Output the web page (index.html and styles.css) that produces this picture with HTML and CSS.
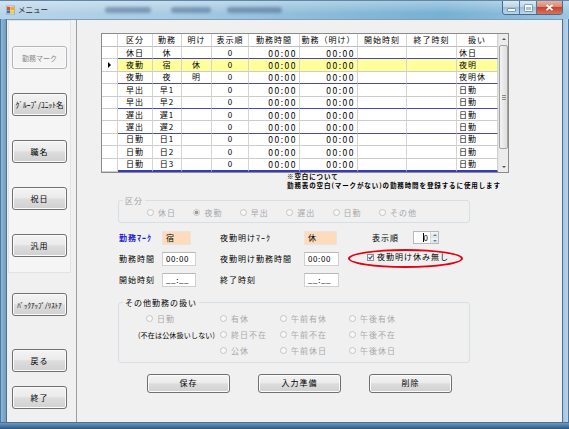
FILE: index.html
```html
<!DOCTYPE html>
<html lang="ja">
<head>
<meta charset="utf-8">
<title>メニュー</title>
<link rel="stylesheet" href="styles.css">
</head>
<body>
<div class="win">
  <div class="titlebar">
    <svg class="appicon" width="9" height="10" viewBox="0 0 9 10">
      <rect x="0.3" y="1" width="8.4" height="8" fill="#fff" stroke="#7d8da0" stroke-width="0.6"/>
      <rect x="1" y="1.8" width="3.4" height="3.2" fill="#e84a2a"/>
      <rect x="4.6" y="1.8" width="3.4" height="3.2" fill="#f6a91c"/>
      <rect x="1" y="5.3" width="3.4" height="3" fill="#2f6fd6"/>
      <rect x="4.6" y="5.3" width="3.4" height="3" fill="#f6d21c"/>
    </svg>
    <span class="title">メニュー</span>
    <span class="blur b1"></span>
    <span class="blur b2"></span>
    <span class="blur b3"></span>
    <div class="caps">
      <span class="cap min"><i></i></span>
      <span class="cap max"><i></i></span>
      <span class="cap close"><svg width="9" height="7" viewBox="0 0 9 7"><path d="M1.5 0.8 L7.5 6.2 M7.5 0.8 L1.5 6.2" stroke="#fff" stroke-width="1.8"/></svg></span>
    </div>
  </div>
  <div class="body">
    <div class="frame-l"></div>
    <div class="client">
      <div class="side">
        <div class="side-panel">
          <div class="btn sbtn disabled">勤務マーク</div>
          <div class="btn sbtn hw">ｸﾞﾙｰﾌﾟ/ﾕﾆｯﾄ名</div>
          <div class="btn sbtn">職名</div>
          <div class="btn sbtn">祝日</div>
          <div class="btn sbtn">汎用</div>
        </div>
        <div class="btn sbtn hw2 b-backup">ﾊﾞｯｸｱｯﾌﾟ/ﾘｽﾄｱ</div>
        <div class="btn sbtn b-back">戻る</div>
        <div class="btn sbtn b-end">終了</div>
      </div>
      <div class="main">
        <div class="dgv">
          <div class="tbl">
            <div class="hdr"><span></span><span>区分</span><span>勤務</span><span>明け</span><span>表示順</span><span>勤務時間</span><span>勤務（明け）</span><span>開始時刻</span><span>終了時刻</span><span>扱い</span></div>
            <div class="row grp"><span class="ind"></span><span class="c">休日</span><span class="c">休</span><span class="c"></span><span class="c n">0</span><span class="r t">00:00</span><span class="r t">00:00</span><span></span><span></span><span class="l">休日</span></div>
            <div class="row sel"><span class="ind"><b class="tri"></b></span><span class="c">夜勤</span><span class="c">宿</span><span class="c">休</span><span class="c n">0</span><span class="r t">00:00</span><span class="r t">00:00</span><span></span><span></span><span class="l">夜明</span></div>
            <div class="row grp"><span class="ind"></span><span class="c">夜勤</span><span class="c">夜</span><span class="c">明</span><span class="c n">0</span><span class="r t">00:00</span><span class="r t">00:00</span><span></span><span></span><span class="l">夜明休</span></div>
            <div class="row"><span class="ind"></span><span class="c">早出</span><span class="c">早1</span><span class="c"></span><span class="c n">0</span><span class="r t">00:00</span><span class="r t">00:00</span><span></span><span></span><span class="l">日勤</span></div>
            <div class="row grp"><span class="ind"></span><span class="c">早出</span><span class="c">早2</span><span class="c"></span><span class="c n">0</span><span class="r t">00:00</span><span class="r t">00:00</span><span></span><span></span><span class="l">日勤</span></div>
            <div class="row"><span class="ind"></span><span class="c">遅出</span><span class="c">遅1</span><span class="c"></span><span class="c n">0</span><span class="r t">00:00</span><span class="r t">00:00</span><span></span><span></span><span class="l">日勤</span></div>
            <div class="row grp"><span class="ind"></span><span class="c">遅出</span><span class="c">遅2</span><span class="c"></span><span class="c n">0</span><span class="r t">00:00</span><span class="r t">00:00</span><span></span><span></span><span class="l">日勤</span></div>
            <div class="row"><span class="ind"></span><span class="c">日勤</span><span class="c">日1</span><span class="c"></span><span class="c n">0</span><span class="r t">00:00</span><span class="r t">00:00</span><span></span><span></span><span class="l">日勤</span></div>
            <div class="row"><span class="ind"></span><span class="c">日勤</span><span class="c">日2</span><span class="c"></span><span class="c n">0</span><span class="r t">00:00</span><span class="r t">00:00</span><span></span><span></span><span class="l">日勤</span></div>
            <div class="row last"><span class="ind"></span><span class="c">日勤</span><span class="c">日3</span><span class="c"></span><span class="c n">0</span><span class="r t">00:00</span><span class="r t">00:00</span><span></span><span></span><span class="l">日勤</span></div>
          </div>
          <div class="vs">
            <span class="arr up"></span>
            <span class="thumb"><i></i></span>
            <span class="sp"></span>
            <span class="arr dn"></span>
          </div>
        </div>

        <div class="note">※空白について<br>勤務表の空白(マークがない)の勤務時間を登録するに使用します</div>

        <div class="form">
          <fieldset class="g1">
            <legend>区分</legend>
            <div class="radios1">
              <span class="rb"><i></i>休日</span>
              <span class="rb on"><i></i>夜勤</span>
              <span class="rb"><i></i>早出</span>
              <span class="rb"><i></i>遅出</span>
              <span class="rb"><i></i>日勤</span>
              <span class="rb"><i></i>その他</span>
            </div>
          </fieldset>

          <div class="frow r1">
            <span class="lbl-blue">勤務ﾏｰｸ</span>
            <span class="inp peach w29">宿</span>
            <span>夜勤明けﾏｰｸ</span>
            <span class="inp peach w33">休</span>
            <span class="spinwrap"><span class="lab">表示順</span><span class="spin"><span class="val"><b class="caret"></b>0</span><span class="arrows"><i class="up"></i><i class="dn"></i></span></span></span>
          </div>
          <div class="frow">
            <span>勤務時間</span>
            <span class="inp w34">00:00</span>
            <span>夜勤明け勤務時間</span>
            <span class="inp w35">00:00</span>
            <span class="chk"><span class="box"><svg width="5" height="5" viewBox="0 0 5 5"><path d="M0.6 2.4 L2 3.9 L4.5 0.6" fill="none" stroke="#3a4e86" stroke-width="1.1"/></svg></span>夜勤明け休み無し</span>
            <span class="ellipse"></span>
          </div>
          <div class="frow">
            <span>開始時刻</span>
            <span class="inp w34">__:__</span>
            <span>終了時刻</span>
            <span class="inp w35">__:__</span>
          </div>

          <fieldset class="g2">
            <legend>その他勤務の扱い</legend>
            <div class="radios2">
              <span class="rb"><i></i>日勤</span>
              <span class="rb"><i></i>有休</span>
              <span class="rb"><i></i>午前有休</span>
              <span class="rb"><i></i>午後有休</span>
              <span class="hint">(不在は公休扱いしない)</span>
              <span class="rb"><i></i>終日不在</span>
              <span class="rb"><i></i>午前不在</span>
              <span class="rb"><i></i>午後不在</span>
              <span></span>
              <span class="rb"><i></i>公休</span>
              <span class="rb"><i></i>午前休日</span>
              <span class="rb"><i></i>午後休日</span>
            </div>
          </fieldset>

          <div class="actions">
            <div class="btn abtn">保存</div>
            <div class="btn abtn">入力準備</div>
            <div class="btn abtn">削除</div>
          </div>
        </div>
      </div>
    </div>
    <div class="frame-r"></div>
  </div>
  <div class="frame-b"></div>
</div>
</body>
</html>
```

FILE: styles.css
```css
* { box-sizing: border-box; margin: 0; padding: 0; }
html, body { width: 569px; height: 429px; overflow: hidden; }
body {
  font-family: "Noto Sans CJK JP", "Noto Sans", sans-serif;
  font-size: 8px;
  line-height: 10px;
  color: #000;
  background: #6f9cc2;
}
.win { width: 569px; height: 429px; display: flex; flex-direction: column; }

/* title bar */
.titlebar {
  height: 19px; flex: none;
  display: flex; align-items: center;
  padding: 0 6px;
  border-top: 1px solid #5f87aa;
  background:
    linear-gradient(to bottom, rgba(255,255,255,.35), rgba(255,255,255,0) 70%),
    linear-gradient(to right, #b9d4e8 0%, #a9cbe3 30%, #8dbcd9 55%, #76b0d3 78%, #9cc5df 100%);
}
.appicon { flex: none; }
.title { margin-left: 3px; font-size: 7.5px; color: #1b1b1b; }
.blur { height: 6px; border-radius: 3px; background: rgba(40,70,110,.4); filter: blur(1.5px); flex: none; }
.b1 { width: 46px; margin-left: 57px; }
.b2 { width: 40px; margin-left: 20px; }
.b3 { width: 55px; margin-left: 16px; }
.caps {
  margin-left: auto; align-self: flex-start;
  display: flex; height: 14px;
  border: 1px solid #4b6a88; border-top: none;
  border-radius: 0 0 4px 4px; overflow: hidden;
}
.cap {
  display: flex; align-items: center; justify-content: center;
  height: 13px;
  background: linear-gradient(#dbe8f3, #b9d2e5 50%, #9fbfd9 50%, #bcd7ea);
}
.min, .max { width: 17px; border-right: 1px solid #5a7896; }
.min i { width: 7px; height: 2px; background: #fff; margin-top: 5px; box-shadow: 0 0 0 .5px #4b6a88; }
.max i { width: 7px; height: 6px; border: 1px solid #fff; border-top-width: 2px; box-shadow: 0 0 0 .5px #4b6a88; }
.close { width: 25px; background: linear-gradient(#eab0a2, #d8826f 50%, #c6432d 50%, #d6735e); }

/* frame */
.body { flex: 1; display: flex; min-height: 0; }
.frame-l { width: 7px; flex: none; background: linear-gradient(to right, #4a7aa3 0 1px, #8fb6d4 1px, #6f9dc4 6px, #52708d 6px); }
.frame-r { width: 7px; flex: none; background: linear-gradient(to right, #52708d 0 1px, #a4c6df 1px, #b9d4e8 6px, #4a7aa3 6px); }
.frame-b { height: 7px; flex: none; background: linear-gradient(#52708d 0 1px, #6a9ac2 1px, #3f6e98 5px, #2e5378); }
.client { flex: 1; display: flex; background: #f0f0f0; border-top: 1px solid #7f9db9; }

/* side */
.side {
  width: 70px; flex: none;
  border-right: 1px solid #9d9d9d;
  padding-left: 1px;
  display: flex; flex-direction: column;
}
.side-panel {
  width: 63px;
  border: 1px solid #dfe3e7;
  background: #f5f5f5;
  padding: 25px 0 15px 3px;
  display: flex; flex-direction: column; gap: 24px;
}
.btn {
  display: flex; align-items: center; justify-content: center;
  border: 1px solid #707070; border-radius: 3px;
  background: linear-gradient(#f3f3f3, #ebebeb 45%, #dddddd 52%, #d0d0d0);
  box-shadow: inset 0 0 0 1px #fbfbfb;
  white-space: nowrap; color: #000;
}
.sbtn { width: 55px; height: 23px; font-size: 8px; letter-spacing: 1px; }
.sbtn.disabled { border-color: #b3b6b9; background: #f4f4f4; color: #8a8a8a; font-size: 7px; letter-spacing: 0; }
.sbtn.hw { font-size: 7.5px; letter-spacing: 0; }
.sbtn.hw2 { font-size: 7px; letter-spacing: 0; }
.side > .sbtn { margin-left: 4px; }
.b-backup { margin-top: 20px; }
.b-back { margin-top: 33px; }
.b-end { margin-top: 14px; }

/* main */
.main { flex: 1; padding: 13px 0 0 24px; display: flex; flex-direction: column; align-items: flex-start; }

.dgv { display: flex; border: 1px solid #8b8b8b; background: #fff; }
.tbl { width: 396px; display: flex; flex-direction: column; }
.hdr, .row { display: grid; grid-template-columns: 16px 35px 29px 30px 37px 51px 58px 49px 50px 41px; }
.hdr { height: 13px; }
.hdr span {
  display: flex; align-items: center; justify-content: center;
  border-right: 1px solid #d5d5d5; border-bottom: 1px solid #bdbdbd;
  letter-spacing: 1px; white-space: nowrap; overflow: hidden;
}
.row { height: 12.4px; }
.row span {
  display: flex; align-items: center;
  border-right: 1px solid #d3d3d3; border-bottom: 1px solid #cccccc;
  white-space: nowrap; overflow: hidden; letter-spacing: 1px;
}
.row .c { justify-content: center; }
.row .r { justify-content: flex-end; padding-right: 3px; }
.row .l { padding-left: 2px; }
.row .t { font-size: 8.5px; letter-spacing: 1.5px; padding-right: 2px; }
.row .n { letter-spacing: 0; }
.row .ind { justify-content: center; }
.row.grp span:not(.ind) { border-bottom-color: #4646c2; }
.row.last { height: 13.4px; }
.row.last span:not(.ind) { border-bottom: 2px solid #3a3ab4; }
.row.sel span:not(.ind) { background: #ffff9c; }
.tri { width: 0; height: 0; border-left: 3px solid #000; border-top: 3px solid transparent; border-bottom: 3px solid transparent; }

.vs { width: 10px; display: flex; flex-direction: column; background: #ececec; border-left: 1px solid #e2e2e2; }
.vs .arr { height: 10px; display: flex; align-items: center; justify-content: center; }
.vs .up::after { content: ""; border-left: 2px solid transparent; border-right: 2px solid transparent; border-bottom: 2px solid #555; }
.vs .dn::after { content: ""; border-left: 2px solid transparent; border-right: 2px solid transparent; border-top: 2px solid #555; }
.vs .thumb {
  height: 104px; margin-top: 1px;
  border: 1px solid #a3a3a3; border-radius: 2px;
  background: linear-gradient(to right, #f3f3f3, #dedede);
  display: flex; align-items: center; justify-content: center;
}
.vs .thumb i { width: 4px; height: 5px; background: repeating-linear-gradient(#8a8a8a 0 1px, transparent 1px 2px); }
.vs .sp { flex: 1; }

.note { margin: -1px 0 0 186px; font-weight: bold; font-size: 6.5px; letter-spacing: .9px; line-height: 9.5px; white-space: nowrap; }

/* form */
.form { margin-left: 17px; width: 352px; }
fieldset { border: 1px solid #d5dfe5; border-radius: 3px; margin: 0; padding: 0; min-width: 0; }
legend { margin-left: 4px; padding: 0 2px; line-height: 10px; height: 10px; letter-spacing: 1px; }
.g1 { margin-top: 5px; }
.g1 legend { color: #a3a3a3; }
.radios1 { display: flex; padding: 1px 0 3px 28px; }
.radios1 .rb { width: 46.4px; }
.rb { display: flex; align-items: center; gap: 4px; height: 12px; color: #a8a8a8; letter-spacing: 1px; white-space: nowrap; }
.rb i { width: 7px; height: 7px; flex: none; border-radius: 50%; border: 1px solid #c4c4c4; background: #f8f8f8; }
.rb.on i { background: radial-gradient(circle, #9a9a9a 0 1.5px, #f8f8f8 2.2px); }

.frow {
  display: grid; grid-template-columns: 43px 58px 84px 63px auto;
  height: 14px; align-items: center;
  padding-left: 1px; margin-top: 7px;
  letter-spacing: 1px; white-space: nowrap;
  position: relative;
}
.frow.r1 { margin-top: 8px; }
.lbl-blue { color: #1c1cd8; font-weight: bold; }
.inp {
  height: 14px; border: 1px solid #d0d0d0; border-top-color: #b8b8b8;
  background: #fff; display: flex; align-items: center;
  padding-left: 3px; letter-spacing: .6px;
}
.w29 { width: 29px; } .w33 { width: 33px; } .w34 { width: 34px; } .w35 { width: 35px; }
.peach { background: #fcdcbd; border-color: #ece4dc; }

.spinwrap { display: flex; align-items: center; margin-left: 5px; }
.spinwrap .lab { width: 41px; }
.spin { width: 26px; height: 13px; border: 1px solid #b9b9b9; background: #fff; display: flex; align-items: center; }
.spin .val { flex: 1; display: flex; justify-content: flex-end; align-items: center; padding-right: 2px; letter-spacing: 0; }
.caret { width: 1px; height: 9px; background: #000; }
.arrows { width: 8px; height: 11px; display: flex; flex-direction: column; border-left: 1px solid #d8d8d8; }
.arrows i { flex: 1; display: flex; align-items: center; justify-content: center; background: linear-gradient(#f4f6f8, #dde4ea); }
.arrows .up::after { content: ""; border-left: 2px solid transparent; border-right: 2px solid transparent; border-bottom: 2px solid #6b7f93; }
.arrows .dn::after { content: ""; border-left: 2px solid transparent; border-right: 2px solid transparent; border-top: 2px solid #6b7f93; }

.chk { display: flex; align-items: center; gap: 3px; letter-spacing: 1px; margin-top: -3px; }
.chk .box { width: 7px; height: 7px; border: 1px solid #8e8f8f; background: #f4f4f4; display: flex; align-items: center; justify-content: center; }
.ellipse { position: absolute; left: 230px; top: -3px; width: 115px; height: 19px; border: 2px solid #e8000e; border-radius: 50%; }

.g2 { margin-top: 11px; }
.radios2 { display: grid; grid-template-columns: 74px 60px 69px auto; grid-auto-rows: 16px; align-items: center; padding: 3px 0 3px 27px; }
.hint { font-size: 7px; letter-spacing: .2px; margin-left: -8px; white-space: nowrap; }

.actions { display: flex; gap: 28px; margin: 11px 0 0 29px; }
.abtn { width: 83px; height: 19px; letter-spacing: 1px; font-size: 8px; }
```
